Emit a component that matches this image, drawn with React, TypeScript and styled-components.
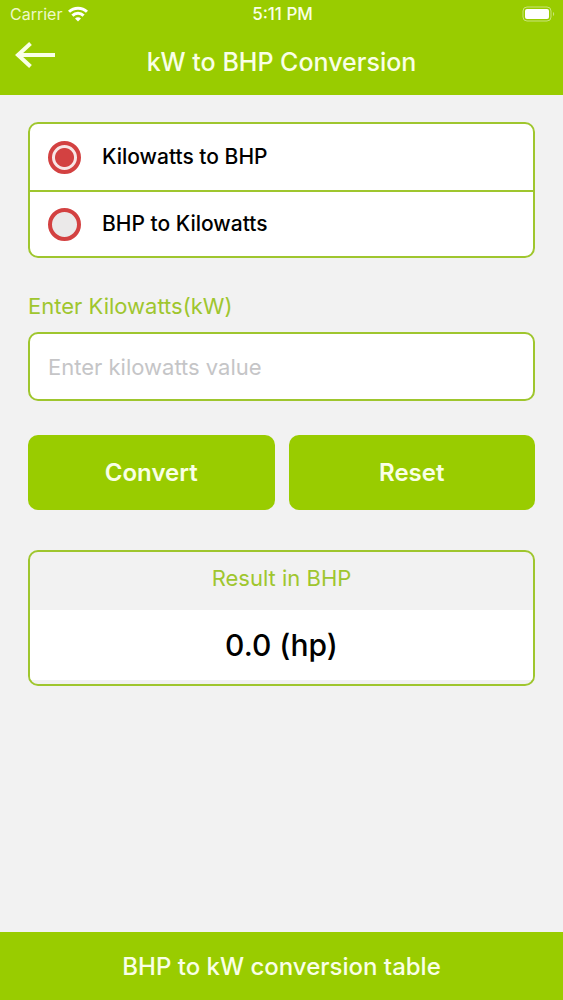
import React, { FormEvent, useState } from 'react';
import styled, { createGlobalStyle } from 'styled-components';

const green = '#99cc00';
const line = '#9fc62e';
const red = '#d34141';
const canvas = '#f2f2f2';

const GlobalStyle = createGlobalStyle`
  *, *::before, *::after { box-sizing: border-box; }
  body {
    margin: 0;
    background: ${canvas};
    font-family: Inter, "Liberation Sans", sans-serif;
    color: #000;
  }
  button, input { font-family: inherit; }
`;

const Screen = styled.div`
  display: flex;
  flex-direction: column;
  min-height: 100vh;
`;

const Header = styled.header`
  background: ${green};
  color: #f9ffe6;
`;

const StatusBar = styled.div`
  display: grid;
  grid-template-columns: 1fr auto 1fr;
  align-items: center;
  height: 28px;
  padding: 0 8px 0 10px;
  font-size: 16px;
  line-height: 28px;
`;

const Carrier = styled.span`
  display: flex;
  align-items: center;
  gap: 6px;
  color: #eef9c8;
`;

const Clock = styled.span`
  font-size: 17px;
  font-weight: 500;
`;

const Battery = styled.svg`
  justify-self: end;
`;

const NavBar = styled.div`
  display: grid;
  grid-template-columns: 48px 1fr 48px;
  align-items: start;
  height: 67px;
  padding: 0 8px;
`;

const BackButton = styled.button`
  display: flex;
  align-items: center;
  justify-content: center;
  height: 54px;
  padding: 0 0 0 6px;
  border: 0;
  background: none;
  color: inherit;
`;

const Title = styled.h1`
  margin: 0;
  font-size: 25px;
  font-weight: 500;
  line-height: 68px;
  text-align: center;
`;

const Form = styled.form`
  flex: 1;
  padding: 27px 28px 32px;
`;

const Options = styled.fieldset`
  margin: 0;
  padding: 0;
  border: 2px solid ${line};
  border-radius: 10px;
  background: #fff;
`;

const Option = styled.label`
  display: flex;
  align-items: center;
  gap: 21px;
  height: 66px;
  padding: 0 18px;
  font-size: 21px;
  font-weight: 500;
  line-height: 28px;

  & + & {
    border-top: 2px solid ${line};
  }
`;

const Radio = styled.input`
  appearance: none;
  flex: none;
  width: 33px;
  height: 33px;
  margin: 0;
  border: 4px solid ${red};
  border-radius: 50%;
  background: #ebe9e9;

  &:checked {
    background: radial-gradient(circle, ${red} 9px, #f8e6e6 10px);
  }
`;

const FieldLabel = styled.label`
  display: block;
  margin-top: 32px;
  color: ${line};
  font-size: 22px;
  line-height: 32px;
`;

const Field = styled.input`
  display: block;
  width: 100%;
  height: 69px;
  margin-top: 10px;
  padding: 0 18px;
  border: 2px solid ${line};
  border-radius: 10px;
  background: #fff;
  font-size: 22px;

  &::placeholder {
    color: #c5c5c7;
    opacity: 1;
  }
`;

const Actions = styled.div`
  display: grid;
  grid-template-columns: 1fr 1fr;
  gap: 14px;
  margin-top: 34px;
`;

const ActionButton = styled.button`
  height: 75px;
  padding: 0;
  border: 0;
  border-radius: 10px;
  background: ${green};
  color: #f9ffe6;
  font-size: 24px;
  font-weight: 600;
`;

const Result = styled.section`
  margin-top: 40px;
  border: 2px solid ${line};
  border-radius: 10px;
  overflow: hidden;
  text-align: center;
`;

const ResultTitle = styled.h2`
  margin: 0;
  padding: 10px 0 16px;
  color: ${line};
  font-size: 22px;
  font-weight: 400;
  line-height: 32px;
`;

const ResultValue = styled.output`
  display: block;
  margin-bottom: 4px;
  background: #fff;
  font-size: 30px;
  font-weight: 500;
  line-height: 70px;
`;

const TableButton = styled.button`
  width: 100%;
  height: 68px;
  border: 0;
  background: ${green};
  color: #f9ffe6;
  font-size: 24px;
  font-weight: 500;
`;

const HP_PER_KW = 1.34102;

export default function App() {
  const [toBhp, setToBhp] = useState(true);
  const [value, setValue] = useState('');
  const [result, setResult] = useState('0.0');

  const reset = () => {
    setValue('');
    setResult('0.0');
  };

  const choose = (next: boolean) => {
    setToBhp(next);
    reset();
  };

  const convert = (event: FormEvent) => {
    event.preventDefault();
    const amount = parseFloat(value) || 0;
    const converted = toBhp ? amount * HP_PER_KW : amount / HP_PER_KW;
    setResult(converted ? converted.toFixed(3) : '0.0');
  };

  return (
    <Screen>
      <GlobalStyle />
      <Header>
        <StatusBar>
          <Carrier>
            Carrier
            <svg width="20" height="16" viewBox="0 0 20 16" fill="none" stroke="#fff" strokeWidth="3" aria-hidden="true">
              <path d="M1 5.8C6 .9 14 .9 19 5.8" />
              <path d="M4.4 9.6c3.2-3.1 8-3.1 11.2 0" />
              <path d="M7 12.4c1.8-1.5 4.2-1.5 6 0l-3 3.1z" fill="#fff" stroke="none" />
            </svg>
          </Carrier>
          <Clock>5:11 PM</Clock>
          <Battery width="33" height="16" viewBox="0 0 33 16" role="img" aria-label="Battery full">
            <rect x="1" y="1" width="28" height="14" rx="4" fill="none" stroke="#c9e47a" strokeWidth="1" />
            <rect x="3" y="3" width="24" height="10" rx="2" fill="#fff" />
            <path d="M31 6c1.6.8 1.6 3.2 0 4z" fill="#c9e47a" />
          </Battery>
        </StatusBar>
        <NavBar>
          <BackButton type="button" aria-label="Back">
            <svg width="40" height="28" viewBox="0 0 40 28" fill="none" stroke="currentColor" strokeWidth="4" aria-hidden="true">
              <path d="M15.5 2.5 3 14l12.500 11.500M3.500 14H40" />
            </svg>
          </BackButton>
          <Title>kW to BHP Conversion</Title>
        </NavBar>
      </Header>

      <Form onSubmit={convert}>
        <Options aria-label="Conversion direction">
          <Option>
            <Radio type="radio" name="direction" checked={toBhp} onChange={() => choose(true)} />
            Kilowatts to BHP
          </Option>
          <Option>
            <Radio type="radio" name="direction" checked={!toBhp} onChange={() => choose(false)} />
            BHP to Kilowatts
          </Option>
        </Options>

        <FieldLabel htmlFor="amount">{toBhp ? 'Enter Kilowatts(kW)' : 'Enter BHP(hp)'}</FieldLabel>
        <Field
          id="amount"
          inputMode="decimal"
          placeholder={toBhp ? 'Enter kilowatts value' : 'Enter BHP value'}
          value={value}
          onChange={(event) => setValue(event.target.value)}
        />

        <Actions>
          <ActionButton type="submit">Convert</ActionButton>
          <ActionButton type="button" onClick={reset}>Reset</ActionButton>
        </Actions>

        <Result>
          <ResultTitle>{toBhp ? 'Result in BHP' : 'Result in Kilowatts'}</ResultTitle>
          <ResultValue htmlFor="amount">{result} {toBhp ? '(hp)' : '(kW)'}</ResultValue>
        </Result>
      </Form>

      <TableButton type="button">BHP to kW conversion table</TableButton>
    </Screen>
  );
}
